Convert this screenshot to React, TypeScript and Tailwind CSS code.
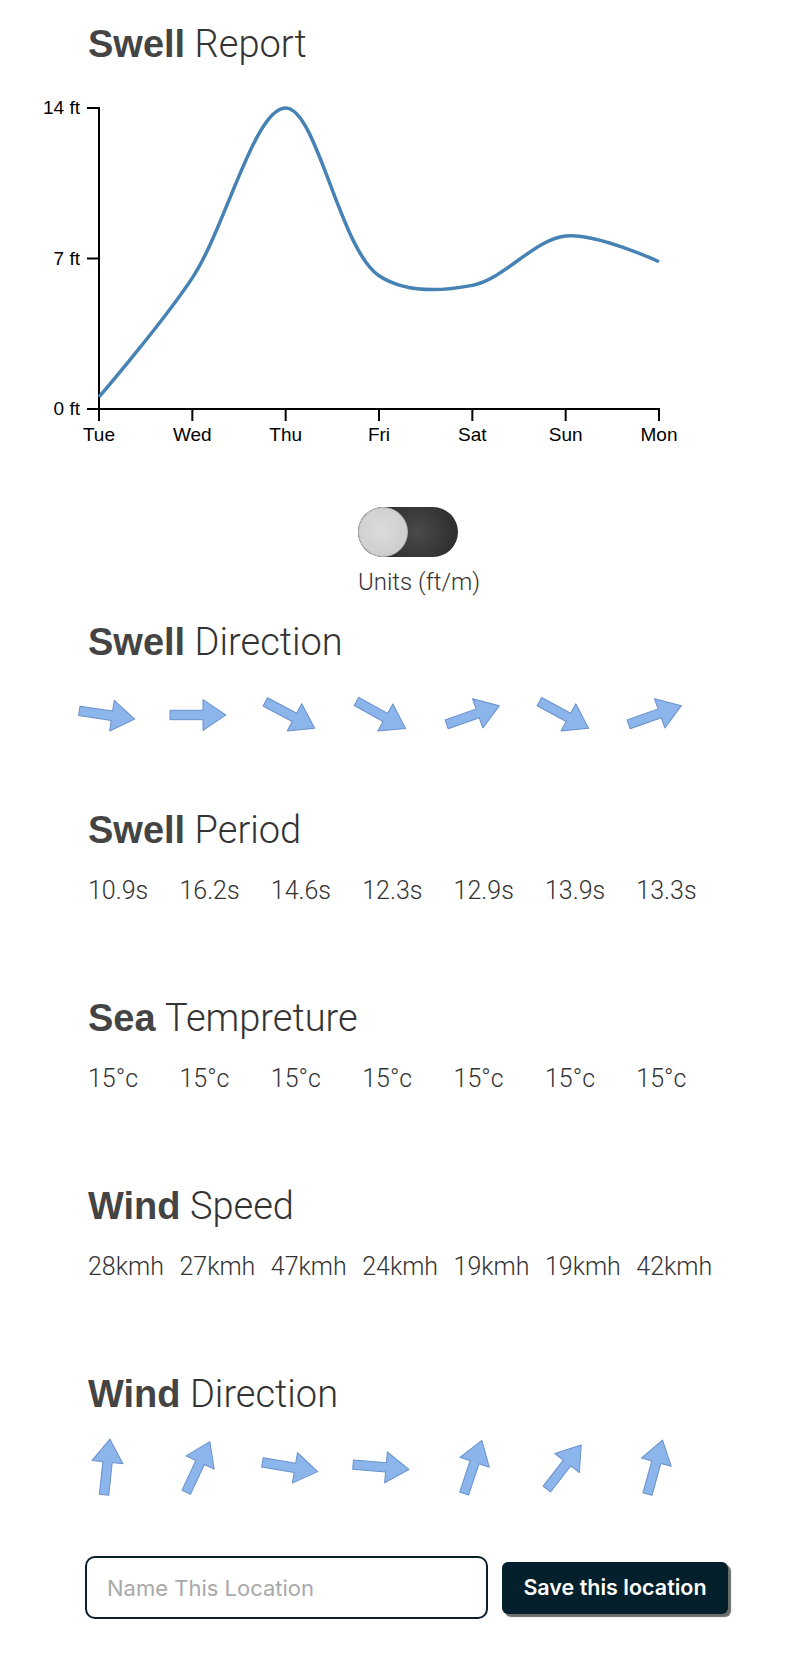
import React from 'react';

const DAYS = ['Tue', 'Wed', 'Thu', 'Fri', 'Sat', 'Sun', 'Mon'];
const WAVE_FT = [0.56, 6.1, 14, 6.2, 5.75, 8.05, 6.85];
const SWELL_DIR = [8.5, 0, 28, 29, -19.5, 28.5, -19.5];
const PERIOD = ['10.9s', '16.2s', '14.6s', '12.3s', '12.9s', '13.9s', '13.3s'];
const SEA_TEMP = ['15°c', '15°c', '15°c', '15°c', '15°c', '15°c', '15°c'];
const WIND_SPEED = ['28kmh', '27kmh', '47kmh', '24kmh', '19kmh', '19kmh', '42kmh'];
const WIND_DIR = [-84, -65, 9.5, 5, -71.5, -52, -74.5];

// chart geometry (svg px)
const X0 = 99;
const X1 = 659;
const Y_TOP = 28;
const Y_BOT = 329;
const MAX_FT = 14;

const xAt = (i: number) => X0 + ((X1 - X0) / (DAYS.length - 1)) * i;
const yAt = (ft: number) => Y_BOT - (ft / MAX_FT) * (Y_BOT - Y_TOP);

type Pt = [number, number];
const dist = (a: Pt, b: Pt) => Math.hypot(a[0] - b[0], a[1] - b[1]);

// centripetal catmull-rom, same maths as d3.curveCatmullRom
function curvePath(pts: Pt[], alpha = 0.5) {
  let d = `M${pts[0][0]},${pts[0][1]}`;
  for (let i = 0; i < pts.length - 1; i++) {
    const p0 = pts[i - 1];
    const p1 = pts[i];
    const p2 = pts[i + 1];
    const p3 = pts[i + 2];
    const l12 = dist(p1, p2);
    const a12 = Math.pow(l12, alpha);
    const a12x2 = Math.pow(l12, 2 * alpha);
    let c1: Pt = p1;
    let c2: Pt = p2;
    if (p0) {
      const l01 = dist(p0, p1);
      const a01 = Math.pow(l01, alpha);
      const a01x2 = Math.pow(l01, 2 * alpha);
      const a = 2 * a01x2 + 3 * a01 * a12 + a12x2;
      const n = 3 * a01 * (a01 + a12);
      c1 = [
        (p1[0] * a - p0[0] * a12x2 + p2[0] * a01x2) / n,
        (p1[1] * a - p0[1] * a12x2 + p2[1] * a01x2) / n,
      ];
    }
    if (p3) {
      const l23 = dist(p2, p3);
      const a23 = Math.pow(l23, alpha);
      const a23x2 = Math.pow(l23, 2 * alpha);
      const b = 2 * a23x2 + 3 * a23 * a12 + a12x2;
      const m = 3 * a23 * (a23 + a12);
      c2 = [
        (p2[0] * b + p1[0] * a23x2 - p3[0] * a12x2) / m,
        (p2[1] * b + p1[1] * a23x2 - p3[1] * a12x2) / m,
      ];
    }
    d += `C${c1[0]},${c1[1]},${c2[0]},${c2[1]},${p2[0]},${p2[1]}`;
  }
  return d;
}

function SwellChart() {
  const pts = WAVE_FT.map((v, i) => [xAt(i), yAt(v)] as Pt);
  const yTicks = [0, 7, 14];
  return (
    <svg className="block mt-[17px]" width={802} height={380}>
      <g fontFamily="'Liberation Sans', Arial, sans-serif" fontSize={19} fill="#000">
        {/* y axis */}
        <path d={`M87,${Y_TOP}H${X0}V${Y_BOT}H87`} fill="none" stroke="#000" strokeWidth={2} />
        {yTicks.map((t) => (
          <g key={t}>
            <line x1={87} x2={X0} y1={yAt(t)} y2={yAt(t)} stroke="#000" strokeWidth={2} />
            <text x={80} y={yAt(t)} dy="0.34em" textAnchor="end">
              {t} ft
            </text>
          </g>
        ))}
        {/* x axis */}
        <path d={`M${X0},${Y_BOT + 12}V${Y_BOT}H${X1}V${Y_BOT + 12}`} fill="none" stroke="#000" strokeWidth={2} />
        {DAYS.map((d, i) => (
          <g key={d}>
            <line x1={xAt(i)} x2={xAt(i)} y1={Y_BOT} y2={Y_BOT + 12} stroke="#000" strokeWidth={2} />
            <text x={xAt(i)} y={360.5} textAnchor="middle">
              {d}
            </text>
          </g>
        ))}
        <path d={curvePath(pts)} fill="none" stroke="#4682b4" strokeWidth={3.5} />
      </g>
    </svg>
  );
}

function Title({ bold, rest }: { bold: string; rest: string }) {
  return (
    <h2 className="text-[38px] leading-[38px] text-[#444] whitespace-nowrap">
      <span className="font-bold font-['Liberation_Sans',Arial,sans-serif]">{bold}</span>{' '}
      <span className="font-light text-[#333]">{rest}</span>
    </h2>
  );
}

function Arrow({ angle }: { angle: number }) {
  return (
    <svg className="block shrink-0 overflow-visible" width={91.4} height={64}>
      <polygon
        transform={`translate(19,32) rotate(${angle})`}
        points="-28,-4.7 5,-4.7 5,-15.5 28,0 5,15.5 5,4.7 -28,4.7"
        fill="#8cb5ec"
        stroke="#6790cb"
        strokeWidth={1}
        strokeLinejoin="round"
      />
    </svg>
  );
}

function ArrowSection({ bold, rest, angles, last }: { bold: string; rest: string; angles: number[]; last?: boolean }) {
  return (
    <section className={last ? 'pl-[88px]' : 'pl-[88px] pb-[64px]'}>
      <Title bold={bold} rest={rest} />
      <div className="flex mt-[22px]">
        {angles.map((a, i) => (
          <Arrow key={i} angle={a} />
        ))}
      </div>
    </section>
  );
}

function ValueSection({ bold, rest, values }: { bold: string; rest: string; values: string[] }) {
  return (
    <section className="pl-[88px] pb-[96px]">
      <Title bold={bold} rest={rest} />
      <div className="flex mt-[29px] text-[25px] leading-[25px] font-light text-[#333]">
        {values.map((v, i) => (
          <span key={i} className="w-[91.4px] shrink-0 whitespace-nowrap">
            {v}
          </span>
        ))}
      </div>
    </section>
  );
}

export default function App() {
  return (
    <div className="w-[802px] min-h-[1660px] bg-white pt-[25px] pb-[40px] font-['Roboto','Liberation_Sans',Arial,sans-serif]">
      <div className="pl-[88px]">
        <Title bold="Swell" rest="Report" />
      </div>
      <SwellChart />

      {/* units toggle */}
      <div className="ml-[358px] mt-[47px] flex flex-col items-start">
        <button
          type="button"
          aria-label="Units"
          className="relative w-[100px] h-[50px] rounded-full bg-[radial-gradient(circle_at_60%_50%,#4a4a4a,#1c1c1c)]"
        >
          <span className="absolute left-0 top-0 w-[50px] h-[50px] rounded-full bg-[radial-gradient(circle_at_45%_45%,#dcdcdc,#c8c8c8)] border border-[#b5b5b5]" />
        </button>
        <span className="mt-[13px] text-[24px] leading-[24px] font-light text-[#333]">Units (ft/m)</span>
      </div>

      <div className="mt-[29px]">
        <ArrowSection bold="Swell" rest="Direction" angles={SWELL_DIR} />
        <ValueSection bold="Swell" rest="Period" values={PERIOD} />
        <ValueSection bold="Sea" rest="Tempreture" values={SEA_TEMP} />
        <ValueSection bold="Wind" rest="Speed" values={WIND_SPEED} />
        <ArrowSection bold="Wind" rest="Direction" angles={WIND_DIR} last />
      </div>

      {/* save location */}
      <div className="pl-[85px] mt-[57px] flex items-center gap-[14px] font-['Inter',sans-serif]">
        <input
          type="text"
          placeholder="Name This Location"
          className="w-[403px] h-[63px] rounded-[10px] border-2 border-[#0b1f2a] pl-[20px] text-[22px] text-[#333] placeholder:text-[#a9a9a9] outline-none"
        />
        <button
          type="button"
          className="w-[226px] h-[52px] rounded-[6px] bg-[#03202c] text-white text-[21.5px] font-semibold shadow-[3px_3px_1px_#6b6b6b]"
        >
          Save this location
        </button>
      </div>
    </div>
  );
}
